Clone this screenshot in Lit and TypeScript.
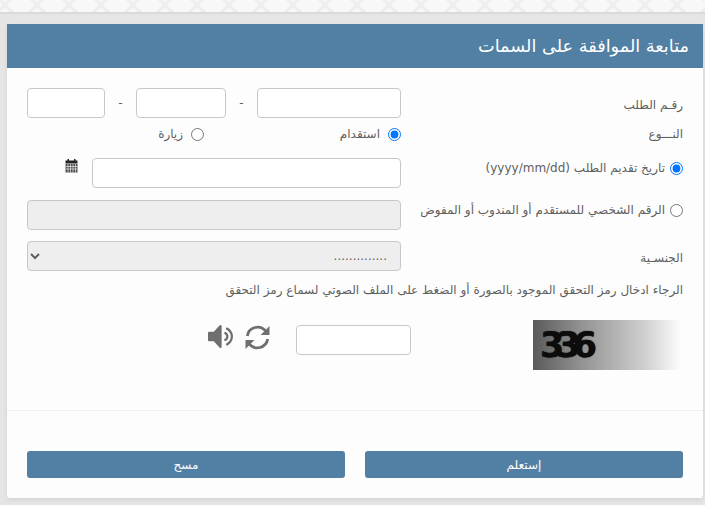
import { LitElement, html, css } from "lit";
import { customElement } from "lit/decorators.js";

const volumePath = "M832 352v1088q0 26-19 45t-45 19-45-19l-333-333h-262q-26 0-45-19t-19-45v-384q0-26 19-45t45-19h262l333-333q19-19 45-19t45 19 19 45zm384 544q0 76-42.5 141.5t-112.5 93.5q-10 5-25 5-26 0-45-18.5t-19-45.5q0-21 12-35.5t29-25 34-23 29-36 12-56.5-12-56.5-29-36-34-23-29-25-12-35.5q0-27 19-45.5t45-18.5q15 0 25 5 70 27 112.5 93t42.5 142zm256 0q0 153-85 282.5t-225 188.5q-13 5-25 5-27 0-46-19t-19-45q0-39 39-59 56-29 76-44 74-54 115.5-135.5t41.5-173.5-41.5-173.5-115.5-135.5q-20-15-76-44-39-20-39-59 0-26 19-45t45-19q13 0 26 5 140 59 225 188.5t85 282.5z";

@customElement("app-root")
export class AppRoot extends LitElement {
  static styles = css`
    :host {
      display: block;
      height: 505px;
      width: 705px;
      overflow: hidden;
      background: #e5e5e5;
      font-family: "DejaVu Sans", "Noto Sans", sans-serif;
      font-size: 12px;
      color: #5f5f5f;
    }
    .band {
      display: block;
      width: 705px;
      height: 12px;
      background: #f8f8f8;
      border-bottom: 2px solid #dadada;
    }
    .card {
      margin: 10px 2px 0 7px;
      height: 474px;
      background: #fdfdfd;
      box-shadow: 0 2px 4px rgba(0, 0, 0, 0.08);
      border-radius: 0 0 3px 3px;
      direction: rtl;
      display: flex;
      flex-direction: column;
    }
    .head {
      height: 44px;
      flex: none;
      background: #527fa4;
      color: #fff;
      font-size: 17.7px;
      display: flex;
      align-items: center;
      padding-right: 14px;
    }
    .body {
      padding: 20px 20px 0;
      height: 322px;
      flex: none;
      border-bottom: 1px solid #eeeeee;
    }
    .row {
      display: grid;
      grid-template-columns: 282px 374px;
      align-items: center;
    }
    .r1 { height: 30px; }
    .r2 { height: 18px; margin-top: 7px; }
    .r3 { height: 30px; margin-top: 15px; align-items: start; }
    .r4 { height: 30px; margin-top: 12px; align-items: start; }
    .r5 { height: 30px; margin-top: 11px; }
    .nudge { padding-top: 3px; }
    .hint { height: 16px; margin-top: 11px; display: flex; align-items: center; }
    .captcha { display: flex; align-items: flex-start; margin-top: 22px; }
    .label { display: flex; align-items: center; gap: 5px; margin-top: 3px; }
    input[type="text"], select {
      box-sizing: border-box;
      height: 30px;
      border: 1px solid #c8c8c8;
      border-radius: 4px;
      background: #fff;
      margin: 0;
      padding: 0;
      display: block;
      outline: none;
    }
    input[type="radio"] {
      width: 13px;
      height: 13px;
      margin: 0;
      flex: none;
    }
    .num { display: flex; justify-content: space-between; align-items: center; }
    .w1 { width: 144px; }
    .w2 { width: 90px; }
    .w3 { width: 78px; }
    .kinds { display: flex; align-items: center; }
    .kind { display: flex; align-items: center; gap: 8px; width: 197px; }
    .kind.second { width: auto; }
    .date { display: flex; align-items: flex-start; gap: 14px; }
    .date input { width: 309px; }
    .cal { margin-top: 1px; width: 13px; height: 14px; flex: none; color: #222; }
    .full { width: 100%; }
    input.off, select {
      background: #eeeeee;
    }
    select {
      font: inherit;
      color: #5f5f5f;
      padding: 0 9px 0 0;
    }
    .img {
      width: 150px;
      height: 50px;
      flex: none;
      background: linear-gradient(90deg, #5a5a5a 0%, #8f8f8f 30%, #d0d0d0 75%, #ffffff 100%);
      direction: ltr;
      display: flex;
      align-items: center;
      padding-left: 7px;
      box-sizing: border-box;
      font-family: "DejaVu Sans", sans-serif;
      font-weight: 700;
      font-size: 35px;
      letter-spacing: -8px;
      color: #0c0c0c;
      text-shadow: 0 0 1px #0c0c0c;
    }
    .captcha input.cinput { width: 115px; margin: 5px 122px 0 0; }
    .ico { display: block; flex: none; }
    .refresh { width: 25px; height: 25px; margin: 5px 26px 0 0; }
    .refresh path { fill: none; stroke: #6f6f6f; stroke-width: 2.7; }
    .refresh polygon { fill: #6f6f6f; }
    .vol { width: 25px; height: 23px; margin: 5px 12px 0 0; fill: #6f6f6f; }
    .foot {
      display: flex;
      gap: 20px;
      padding: 40px 20px 0;
    }
    button {
      flex: 1;
      height: 27px;
      border: 0;
      border-radius: 3px;
      background: #527fa4;
      color: #fff;
      font: inherit;
      padding: 0;
    }
  `;

  render() {
    return html`
      <svg class="band" viewBox="0 0 705 12">
        <defs>
          <pattern id="lat" patternUnits="userSpaceOnUse" x="21" y="-11" width="32" height="32">
            <path d="M0 0L32 32M32 0L0 32" stroke="#eeeeee" stroke-width="3" fill="none"></path>
          </pattern>
        </defs>
        <rect width="705" height="12" fill="url(#lat)"></rect>
      </svg>
      <div class="card">
        <div class="head">متابعة الموافقة على السمات</div>
        <div class="body">
          <div class="row r1">
            <div class="nudge">رقـم الطلب</div>
            <div class="num">
              <input type="text" class="w1" /><span>-</span>
              <input type="text" class="w2" /><span>-</span>
              <input type="text" class="w3" />
            </div>
          </div>
          <div class="row r2">
            <div>النـــوع</div>
            <div class="kinds">
              <label class="kind"><input type="radio" name="k" checked />استقدام</label>
              <label class="kind second"><input type="radio" name="k" />زيارة</label>
            </div>
          </div>
          <div class="row r3">
            <label class="label"><input type="radio" name="s" checked />تاريخ تقديم الطلب (yyyy/mm/dd)</label>
            <div class="date">
              <input type="text" />
              <svg class="cal" viewBox="0 0 13 14">
                <rect x="2.5" y="0" width="1.5" height="2" fill="currentColor"></rect>
                <rect x="9" y="0" width="1.5" height="2" fill="currentColor"></rect>
                <rect x="0.5" y="1.5" width="12" height="3" fill="currentColor"></rect>
                <rect x="0.5" y="5" width="12" height="8.5" fill="currentColor" opacity="0.8"></rect>
                <path d="M3 5v8.5M5.5 5v8.5M8 5v8.5M10.5 5v8.5M0.5 7.5h12M0.5 10h12" stroke="#fff" stroke-width="0.6" fill="none"></path>
              </svg>
            </div>
          </div>
          <div class="row r4">
            <label class="label"><input type="radio" name="s" />الرقم الشخصي للمستقدم أو المندوب أو المفوض</label>
            <input type="text" class="off full" disabled />
          </div>
          <div class="row r5">
            <div class="nudge">الجنسـية</div>
            <select class="full"><option>..............</option></select>
          </div>
          <div class="hint">الرجاء ادخال رمز التحقق الموجود بالصورة أو الضغط على الملف الصوتي لسماع رمز التحقق</div>
          <div class="captcha">
            <div class="img">336</div>
            <input type="text" class="cinput" />
            <svg class="ico refresh" viewBox="0 0 24 24">
              <path d="M2.2 10.5A10 10 0 0 1 20 6"></path>
              <polygon points="23.5,1 23.5,9.5 15,9.5"></polygon>
              <path d="M21.8 13.5A10 10 0 0 1 4 18"></path>
              <polygon points="0.5,23 0.5,14.5 9,14.5"></polygon>
            </svg>
            <svg class="ico vol" viewBox="64 288 1408 1216" preserveAspectRatio="none"><path d="${volumePath}"></path></svg>
          </div>
        </div>
        <div class="foot">
          <button>إستعلم</button>
          <button>مسح</button>
        </div>
      </div>
    `;
  }
}
